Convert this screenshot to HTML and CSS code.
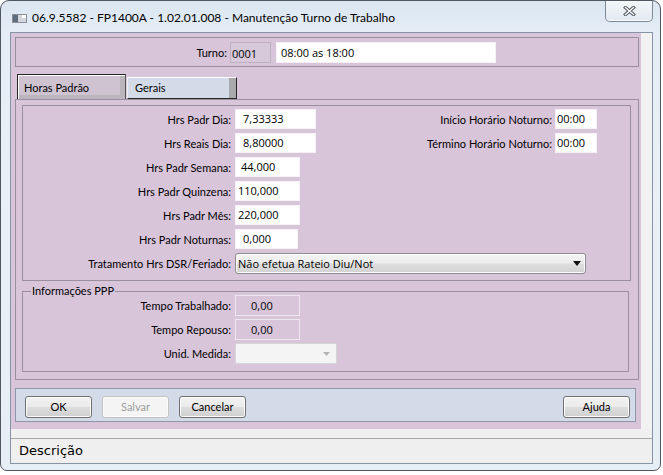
FILE: index.html
```html
<!DOCTYPE html>
<html lang="pt">
<head>
<meta charset="utf-8">
<title>Manutenção Turno de Trabalho</title>
<link rel="stylesheet" href="styles.css">
</head>
<body>
<div class="window">
  <div class="titlebar">
    <svg class="app-icon" width="15" height="9" viewBox="0 0 15 9">
      <rect x="0.5" y="0.5" width="14" height="8" fill="#d3d7db" stroke="#8a9199"/>
      <rect x="1" y="1" width="5" height="7" fill="#5f6f80"/>
      <rect x="10" y="1" width="4" height="3" fill="#ffffff"/>
    </svg>
    <span class="title">06.9.5582 - FP1400A - 1.02.01.008 - Manutenção Turno de Trabalho</span>
    <div class="close">
      <svg width="13" height="10" viewBox="0 0 13 10">
        <path d="M2.5 1.5 L10.5 8.5 M10.5 1.5 L2.5 8.5" stroke="#555b62" stroke-width="3.4" stroke-linecap="square" fill="none"/>
        <path d="M2.5 1.5 L10.5 8.5 M10.5 1.5 L2.5 8.5" stroke="#ffffff" stroke-width="1.4" stroke-linecap="square" fill="none"/>
      </svg>
    </div>
  </div>
  <div class="client">
    <div class="main">
      <div class="panel">
        <div class="turno-box">
          <span class="turno-lbl">Turno:</span>
          <span class="fld fld-code">0001</span>
          <span class="fld fld-desc">08:00 as 18:00</span>
        </div>
        <div class="tabs">
          <div class="tab tab-active">Horas Padrão</div>
          <div class="tab tab-inactive">Gerais</div>
        </div>
        <div class="tab-content">
          <div class="fields-box">
            <div class="row">
              <span class="lbl">Hrs Padr Dia:</span>
              <span class="fld w81 pl7">7,33333</span>
              <span class="right-group">
                <span class="lbl-r">Início Horário Noturno:</span>
                <span class="fld w42 pl1">00:00</span>
              </span>
            </div>
            <div class="row">
              <span class="lbl">Hrs Reais Dia:</span>
              <span class="fld w81 pl7">8,80000</span>
              <span class="right-group">
                <span class="lbl-r">Término Horário Noturno:</span>
                <span class="fld w42 pl1">00:00</span>
              </span>
            </div>
            <div class="row">
              <span class="lbl">Hrs Padr Semana:</span>
              <span class="fld w65 pl5">44,000</span>
            </div>
            <div class="row">
              <span class="lbl">Hrs Padr Quinzena:</span>
              <span class="fld w65 pl2">110,000</span>
            </div>
            <div class="row">
              <span class="lbl">Hrs Padr Mês:</span>
              <span class="fld w65 pl2">220,000</span>
            </div>
            <div class="row">
              <span class="lbl">Hrs Padr Noturnas:</span>
              <span class="fld w63 pl7">0,000</span>
            </div>
            <div class="row row-select">
              <span class="lbl">Tratamento Hrs DSR/Feriado:</span>
              <span class="select">
                <span class="select-text">Não efetua Rateio Diu/Not</span>
                <svg width="8" height="5" viewBox="0 0 8 5"><path d="M0 0 H8 L4 5 Z" fill="#111"/></svg>
              </span>
            </div>
          </div>
          <div class="group">
            <span class="group-title">Informações PPP</span>
            <div class="row row-ppp">
              <span class="lbl">Tempo Trabalhado:</span>
              <span class="fld fld-dis w65 pl15">0,00</span>
            </div>
            <div class="row row-ppp">
              <span class="lbl">Tempo Repouso:</span>
              <span class="fld fld-dis w65 pl15">0,00</span>
            </div>
            <div class="row row-ppp">
              <span class="lbl">Unid. Medida:</span>
              <span class="select select-dis">
                <span class="select-text"></span>
                <svg width="7" height="4" viewBox="0 0 7 4"><path d="M0 0 H7 L3.5 4 Z" fill="#b4b4b4"/></svg>
              </span>
            </div>
          </div>
        </div>
        <div class="button-bar">
          <button class="btn">OK</button>
          <button class="btn btn-dis">Salvar</button>
          <button class="btn">Cancelar</button>
          <button class="btn btn-help">Ajuda</button>
        </div>
      </div>
      <div class="strip"></div>
    </div>
    <div class="status">Descrição</div>
  </div>
</div>
</body>
</html>
```

FILE: styles.css
```css
html, body {
  margin: 0;
  padding: 0;
  background: #ffffff;
}

body {
  font-family: Lato, "Open Sans", "Liberation Sans", sans-serif;
  color: #000;
}

.window {
  width: 661px;
  height: 471px;
  box-sizing: border-box;
  border: 1px solid #4f5761;
  border-radius: 9px 9px 7px 7px;
  background: linear-gradient(to bottom, #dbe6f1 0px, #e4edf6 30px, #e9f0f7 200px, #e6eef6 100%);
  display: flex;
  flex-direction: column;
  overflow: hidden;
}

/* ---------- title bar ---------- */
.titlebar {
  height: 31px;
  flex-shrink: 0;
  display: flex;
  align-items: flex-start;
}

.app-icon {
  margin: 13px 0 0 11px;
  flex-shrink: 0;
}

.title {
  margin: 9px 0 0 5px;
  font-size: 12px;
  line-height: 16px;
  white-space: nowrap;
}

.close {
  margin: -1px 7px 0 auto;
  width: 48px;
  height: 22px;
  box-sizing: border-box;
  border: 1px solid #7b8896;
  border-top: none;
  border-radius: 0 0 5px 5px;
  background: linear-gradient(to bottom, #f4f8fb, #e2e9f1);
  box-shadow: inset 0 -1px 0 #ffffff;
  display: flex;
  align-items: center;
  justify-content: center;
  padding-top: 1px;
}

/* ---------- client ---------- */
.client {
  width: 643px;
  height: 432px;
  margin-left: 9px;
  box-sizing: border-box;
  border: 1px solid #8694a3;
  background: #f0f0f0;
  display: flex;
  flex-direction: column;
}

.main {
  display: flex;
  height: 396px;
  flex-shrink: 0;
}

.panel {
  width: 630px;
  box-sizing: border-box;
  background: #d8c5da;
  padding: 4px 0 0 4px;
  display: flex;
  flex-direction: column;
}

.strip {
  flex: 1;
  background: #f2f2f2;
}

.status {
  margin-top: 9px;
  border-top: 1px solid #a8a8a8;
  height: 24px;
  line-height: 24px;
  padding-left: 8px;
  font-family: "DejaVu Sans", sans-serif;
  font-size: 13px;
  background: #f0efef;
}

/* ---------- turno ---------- */
.turno-box {
  width: 624px;
  height: 30px;
  box-sizing: border-box;
  border: 1px solid #9b8e9f;
  display: flex;
  align-items: center;
  font-size: 11px;
}

.turno-lbl {
  width: 211px;
  text-align: right;
  margin-right: 3px;
}

.fld {
  display: block;
  box-sizing: border-box;
  height: 20px;
  background: #ffffff;
  border: 1px solid #f5f1f6;
  font-family: "Open Sans", sans-serif;
  font-size: 11px;
  line-height: 18px;
  white-space: nowrap;
  flex-shrink: 0;
}

.fld-code {
  width: 41px;
  height: 21px;
  margin-right: 5px;
  background: #d7c8da;
  border-color: #bdb0c0;
  line-height: 22px;
  padding-left: 1px;
}

.fld-desc {
  width: 220px;
  height: 21px;
  padding-left: 4px;
  line-height: 19px;
}

/* ---------- tabs ---------- */
.tabs {
  display: flex;
  align-items: flex-end;
  height: 25px;
  margin-top: 7px;
  padding-left: 2px;
  font-size: 11px;
}

.tab {
  box-sizing: border-box;
  line-height: 14px;
  white-space: nowrap;
}

.tab-active {
  width: 109px;
  height: 25px;
  border-top: 1px solid #262626;
  border-left: 1px solid #262626;
  border-right: 1px solid #555555;
  background: #cfc3d2;
  box-shadow: inset 1px 1px 0 #ffffff, inset -5px -4px 0 #bbb6bc;
  padding: 6px 0 0 6px;
}

.tab-inactive {
  width: 110px;
  height: 22px;
  margin-left: 1px;
  border-top: 1px solid #ffffff;
  border-left: 1px solid #f2f2f2;
  border-right: 1px solid #262626;
  border-bottom: 1px solid #262626;
  background: #d4dbe8;
  box-shadow: inset -7px 0 0 #a9a9ab;
  padding: 3px 0 0 7px;
}

.tab-content {
  width: 624px;
  height: 281px;
  box-sizing: border-box;
  border: 1px solid #9b8e9f;
  padding: 5px 0 0 6px;
}

/* ---------- fields ---------- */
.fields-box {
  width: 609px;
  height: 176px;
  box-sizing: border-box;
  border: 1px solid #9b8e9f;
  padding-top: 3px;
  display: flex;
  flex-direction: column;
  gap: 4px;
}

.row {
  display: flex;
  align-items: center;
  height: 20px;
  font-size: 11px;
}

.row-select {
  height: 21px;
}

.lbl {
  width: 208px;
  margin-right: 4px;
  text-align: right;
  white-space: nowrap;
  flex-shrink: 0;
}

.right-group {
  margin-left: auto;
  margin-right: 33px;
  display: flex;
  align-items: center;
}

.lbl-r {
  margin-right: 3px;
  white-space: nowrap;
}

.w81 { width: 81px; }
.w65 { width: 65px; }
.w63 { width: 63px; }
.w42 { width: 42px; }
.pl1 { padding-left: 1px; }
.pl2 { padding-left: 2px; }
.pl5 { padding-left: 5px; }
.pl7 { padding-left: 7px; }
.pl15 { padding-left: 15px; }

.select {
  width: 351px;
  height: 21px;
  box-sizing: border-box;
  border: 1px solid #8c8d8e;
  border-radius: 3px;
  background: linear-gradient(to bottom, #f4f4f4 0%, #ececec 48%, #dedede 52%, #d2d2d2 100%);
  box-shadow: inset 0 0 0 1px #fbfbfb;
  display: flex;
  align-items: center;
  justify-content: space-between;
  padding: 0 4px 0 2px;
  font-family: "Open Sans", sans-serif;
  font-size: 11px;
  flex-shrink: 0;
}

.select-dis {
  width: 102px;
  border-color: #d6d6d6;
  border-radius: 2px;
  background: #f4f4f4;
  box-shadow: none;
  padding-right: 6px;
}

/* ---------- group box ---------- */
.group {
  position: relative;
  width: 607px;
  height: 81px;
  margin-top: 10px;
  box-sizing: border-box;
  border: 1px solid #9b8e9f;
  padding-top: 3px;
  display: flex;
  flex-direction: column;
  gap: 3px;
}

.group-title {
  position: absolute;
  top: -7px;
  left: 8px;
  padding: 0 1px;
  background: #d8c5da;
  font-size: 11px;
  line-height: 12px;
}

.row-ppp {
  height: 21px;
}

.fld-dis {
  height: 21px;
  background: #d8c5da;
  border: 1px solid #efe7f0;
  line-height: 20px;
}

/* ---------- buttons ---------- */
.button-bar {
  width: 621px;
  height: 34px;
  margin-top: 8px;
  box-sizing: border-box;
  border: 1px solid #8e96a7;
  background: #d3dbe9;
  display: flex;
  align-items: flex-start;
  gap: 10px;
  padding: 7px 5px 0 9px;
}

.btn {
  width: 67px;
  height: 22px;
  box-sizing: border-box;
  border: 1px solid #707070;
  border-radius: 3px;
  background: linear-gradient(to bottom, #f2f2f2 0%, #ebebeb 48%, #dddddd 52%, #cfcfcf 100%);
  box-shadow: inset 0 0 0 1px #fcfcfc;
  font-family: Lato, "Open Sans", sans-serif;
  font-size: 11px;
  color: #000;
  padding: 0;
  line-height: 18px;
}

.btn-dis {
  border-color: #c4c4c4;
  background: #f4f4f4;
  color: #9d9d9d;
}

.btn-help {
  margin-left: auto;
}
```
